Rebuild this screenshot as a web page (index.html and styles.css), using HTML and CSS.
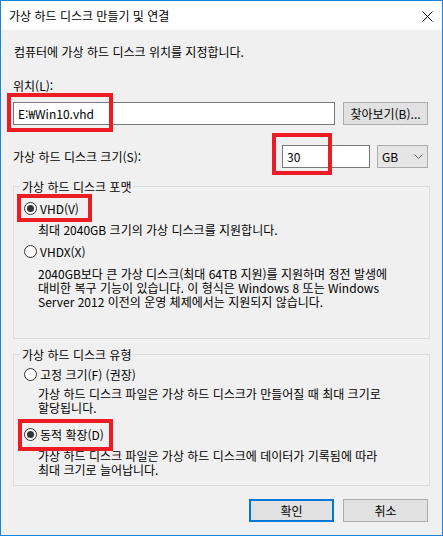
FILE: index.html
```html
<!DOCTYPE html>
<html lang="ko">
<head>
    <meta charset="UTF-8">
    <title>가상 하드 디스크 만들기 및 연결</title>
    <link rel="stylesheet" href="styles.css">
</head>
<body>

    <div class="window">
        <div class="titlebar">
            <span class="title">가상 하드 디스크 만들기 및 연결</span>
            <svg class="close" width="11" height="11" viewBox="0 0 11 11">
                <path d="M0.5 0.5L10.5 10.5M10.5 0.5L0.5 10.5" stroke="#000" stroke-width="1" fill="none"/>
            </svg>
        </div>

        <div class="content">
            <p class="intro">컴퓨터에 가상 하드 디스크 위치를 지정합니다.</p>

            <div class="field-label">위치(L):</div>
            <div class="row path-row">
                <div class="textbox path">E:₩Win10.vhd</div>
                <button class="btn">찾아보기(B)...</button>
            </div>

            <div class="row size-row">
                <span class="size-label">가상 하드 디스크 크기(S):</span>
                <div class="textbox size">30</div>
                <div class="combo">
                    <span>GB</span>
                    <svg width="9" height="5" viewBox="0 0 9 5">
                        <path d="M0.5 0.5L4.5 4.5L8.5 0.5" stroke="#606060" stroke-width="1" fill="none"/>
                    </svg>
                </div>
            </div>

            <!-- 포맷 -->
            <fieldset class="group group-format">
                <legend>가상 하드 디스크 포맷</legend>
                <div class="radio first"><span class="dot on"></span>VHD(V)</div>
                <p class="desc single">최대 2040GB 크기의 가상 디스크를 지원합니다.</p>
                <div class="radio second"><span class="dot"></span>VHDX(X)</div>
                <p class="desc multi">2040GB보다 큰 가상 디스크(최대 64TB 지원)를 지원하며 정전 발생에<br>대비한 복구 기능이 있습니다. 이 형식은 Windows 8 또는 Windows<br>Server 2012 이전의 운영 체제에서는 지원되지 않습니다.</p>
            </fieldset>

            <!-- 유형 -->
            <fieldset class="group group-type">
                <legend>가상 하드 디스크 유형</legend>
                <div class="radio first"><span class="dot"></span>고정 크기(F) (권장)</div>
                <p class="desc fixed">가상 하드 디스크 파일은 가상 하드 디스크가 만들어질 때 최대 크기로<br>할당됩니다.</p>
                <div class="radio dynamic"><span class="dot on"></span>동적 확장(D)</div>
                <p class="desc dyn">가상 하드 디스크 파일은 가상 하드 디스크에 데이터가 기록됨에 따라<br>최대 크기로 늘어납니다.</p>
            </fieldset>

            <div class="buttons">
                <button class="btn default">확인</button>
                <button class="btn">취소</button>
            </div>
        </div>

        <!-- 빨간 표시 -->
        <div class="mark mark-path"></div>
        <div class="mark mark-size"></div>
        <div class="mark mark-vhd"></div>
        <div class="mark mark-dyn"></div>
    </div>

</body>
</html>
```

FILE: styles.css
```css
* {
    box-sizing: border-box;
}

body {
    margin: 0;
    font-family: "Noto Sans CJK KR", "Noto Sans", sans-serif;
    font-size: 12px;
    color: #000;
    background: #fff;
}

.window {
    position: relative;
    width: 443px;
    height: 536px;
    border: 1px solid #1883d7;
    background: #f0f0f0;
    display: flex;
    flex-direction: column;
}

.titlebar {
    height: 29px;
    flex: none;
    background: #fff;
    display: flex;
    align-items: center;
    justify-content: space-between;
    padding: 0 9px 0 8px;
}

.close {
    margin-top: 1px;
}

.content {
    flex: 1;
    padding: 0 12px;
    line-height: 15px;
}

.intro {
    margin: 14px 0 0 1px;
}

.field-label {
    margin-top: 19px;
}

.row {
    display: flex;
    align-items: center;
    height: 23px;
}

.path-row {
    margin-top: 9px;
    gap: 8px;
}

.size-row {
    margin-top: 20px;
}

.textbox {
    height: 23px;
    background: #fff;
    border: 1px solid #7a7a7a;
    padding: 0 4px;
    display: flex;
    align-items: center;
}

.path {
    width: 322px;
}

.size {
    width: 88px;
    margin-left: auto;
}

.combo {
    width: 51px;
    height: 23px;
    margin-left: 7px;
    margin-right: 2px;
    background: #e5e5e5;
    border: 1px solid #acacac;
    display: flex;
    align-items: center;
    justify-content: space-between;
    padding: 0 4px 0 4px;
}

.btn {
    width: 85px;
    height: 23px;
    padding: 0;
    font-family: inherit;
    font-size: 12px;
    color: #000;
    background: #e1e1e1;
    border: 1px solid #adadad;
}

.btn.default {
    border: 2px solid #0078d7;
}

.group {
    margin: 11px 0 0;
    padding: 0 0 0 10px;
    border: 1px solid #dcdcdc;
    min-width: 0;
}

.group legend {
    margin-left: -4px;
    padding: 0 2px;
    line-height: 15px;
}

.group-format {
    padding-bottom: 29px;
}

.group-type {
    margin-top: 8px;
    padding-bottom: 8px;
}

.radio {
    display: flex;
    align-items: center;
    gap: 3px;
    height: 15px;
}

.dot {
    width: 13px;
    height: 13px;
    border: 1px solid #333;
    border-radius: 50%;
    background: #fff;
}

.dot.on::after {
    content: "";
    display: block;
    width: 7px;
    height: 7px;
    margin: 2px;
    border-radius: 50%;
    background: #333;
}

.desc {
    margin: 7px 0 0 14px;
    line-height: 14px;
    white-space: nowrap;
}

.group-format .first { margin-top: 7px; }
.group-format .second { margin-top: 7px; }
.group-format .multi { margin-top: 8px; }

.group-type .first { margin-top: 5px; }
.group-type .fixed { margin-top: 5px; }
.group-type .dynamic { margin-top: 12px; }

.buttons {
    margin-top: 13px;
    display: flex;
    justify-content: flex-end;
    gap: 9px;
    padding-right: 2px;
}

/* 빨간 강조 상자 */
.mark {
    position: absolute;
    border: 4px solid #ed1c24;
}

.mark-path {
    left: 6px;
    top: 92px;
    width: 106px;
    height: 39px;
}

.mark-size {
    left: 271px;
    top: 132px;
    width: 60px;
    height: 42px;
}

.mark-vhd {
    left: 16px;
    top: 193px;
    width: 75px;
    height: 28px;
}

.mark-dyn {
    left: 17px;
    top: 418px;
    width: 95px;
    height: 32px;
}
```
